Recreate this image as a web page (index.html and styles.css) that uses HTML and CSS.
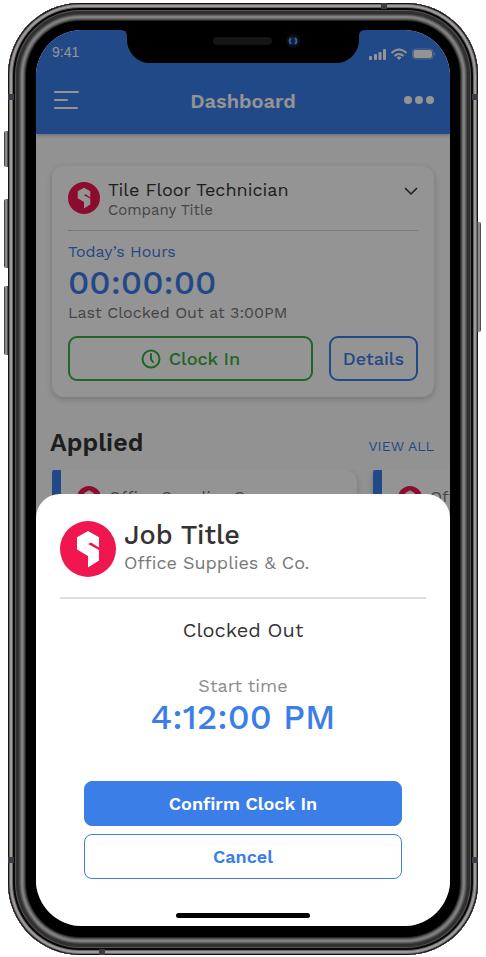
FILE: index.html
```
<!DOCTYPE html>
<html lang="en">
<head>
<meta charset="utf-8">
<meta name="viewport" content="width=device-width, initial-scale=1">
<title>Dashboard</title>
<link rel="stylesheet" href="styles.css">
</head>
<body>
<svg class="defs" aria-hidden="true">
  <symbol id="logo" viewBox="0 0 56 56">
    <circle cx="28" cy="28" r="28" fill="#f01650"/>
    <path d="M28 10 39 16.300V26.500L31 21.500 28 23 39 29V39.500L28 46.500V35L17 28.500V16.300Z" fill="#fff"/>
  </symbol>
</svg>
<div class="phone">
  <span class="key key-mute"></span><span class="key key-up"></span><span class="key key-down"></span><span class="key key-power"></span>
  <span class="band band-tl"></span><span class="band band-tr"></span><span class="band band-bl"></span><span class="band band-br"></span><span class="band band-top"></span><span class="band band-bottom"></span>
  <div class="screen">
    <main class="dashboard">
      <header class="topbar">
        <div class="status">
          <span>9:41</span>
          <svg width="67" height="12" viewBox="0 0 67 12" fill="#fff" aria-hidden="true">
            <rect x="0" y="8" width="3" height="4" rx="1"/><rect x="5" y="6" width="3" height="6" rx="1"/><rect x="9.500" y="4" width="3" height="8" rx="1"/><rect x="14" y="1" width="3" height="11" rx="1"/>
            <g fill="none" stroke="#fff" stroke-width="2"><path d="M22.500 5Q30 -2 37.500 5"/><path d="M25.500 8Q30 4 34.500 8"/></g><path d="M27.500 9.500Q30 7.500 32.500 9.500L30 12Z"/>
            <rect x="43.500" y="1" width="20.500" height="10" rx="3" fill="none" stroke="#fff" stroke-opacity=".4"/><rect x="44.500" y="2" width="18.500" height="8" rx="2"/><path d="M65 4Q67 6 65 8Z" opacity=".5"/>
          </svg>
        </div>
        <div class="nav">
          <button class="icon-btn" aria-label="Menu"><svg width="30" height="20" viewBox="0 0 30 20" stroke="#fff" stroke-width="2" stroke-linecap="round"><path d="M3 1H26M3 9H15M3 17H25"/></svg></button>
          <h1>Dashboard</h1>
          <button class="icon-btn" aria-label="More"><svg width="30" height="20" viewBox="0 0 30 20" fill="#fff"><circle cx="4" cy="9" r="4"/><circle cx="15" cy="9" r="4"/><circle cx="26" cy="9" r="4"/></svg></button>
        </div>
      </header>
      <section class="card shift">
        <div class="shift-head">
          <svg class="logo-md" aria-hidden="true"><use href="#logo"/></svg>
          <div class="names"><h2>Tile Floor Technician</h2><p>Company Title</p></div>
          <button class="icon-btn" aria-label="Expand"><svg width="14" height="10" viewBox="0 0 14 10" fill="none" stroke="#333" stroke-width="1.500"><path d="M1 1 7 7 13 1"/></svg></button>
        </div>
        <p class="label">Today’s Hours</p>
        <p class="hours">00:00:00</p>
        <p class="last">Last Clocked Out at 3:00PM</p>
        <div class="actions">
          <button class="btn-outline green"><svg width="20" height="20" viewBox="0 0 20 20" fill="none" stroke="currentColor" stroke-width="2" aria-hidden="true"><circle cx="10" cy="10" r="8.500"/><path d="M10 5V10.500L12 13" stroke-linecap="round"/></svg>Clock In</button>
          <button class="btn-outline blue">Details</button>
        </div>
      </section>
      <div class="section-head"><h2>Applied</h2><a href="#applied">VIEW ALL</a></div>
      <div class="jobs" id="applied">
        <article class="card job"><svg class="logo-sm" aria-hidden="true"><use href="#logo"/></svg><p>Office Supplies Co.</p></article>
        <article class="card job"><svg class="logo-sm" aria-hidden="true"><use href="#logo"/></svg><p>Office Supplies Co.</p></article>
      </div>
    </main>
    <div class="scrim"></div>
    <svg class="notch" width="244" height="34" viewBox="0 0 244 34" aria-hidden="true">
      <path d="M0 0H244V1Q238 1 238 7V10A23 23 0 0 1 215 34H29A23 23 0 0 1 6 10V7Q6 1 0 1Z"/>
      <rect x="92" y="8" width="59" height="8" rx="4" fill="#151515"/>
      <circle cx="172" cy="12" r="7" fill="#0d0e12"/><circle cx="172" cy="12" r="4" fill="#102044"/>
      <path d="M170 9Q167 12 170 15M174 9Q177 12 174 15" fill="none" stroke="#2c609b" stroke-width="2"/>
    </svg>
    <section class="sheet" role="dialog" aria-labelledby="job">
      <div class="sheet-head">
        <svg class="logo-lg" aria-hidden="true"><use href="#logo"/></svg>
        <div class="names"><h2 id="job">Job Title</h2><p>Office Supplies &amp; Co.</p></div>
      </div>
      <p class="state">Clocked Out</p>
      <p class="start">Start time</p>
      <p class="time">4:12:00 PM</p>
      <div class="choices">
        <button class="primary">Confirm Clock In</button>
        <button class="secondary">Cancel</button>
      </div>
      <span class="home"></span>
    </section>
  </div>
</div>
</body>
</html>
```
FILE: styles.css
```
:root { --blue: #3c7ee8; --ink: #333; --muted: #777; }
* { box-sizing: border-box; }
body {
  margin: 0;
  min-height: 100vh;
  padding: 3px 8px 2px;
  display: flex;
  background: #fff;
  color: var(--ink);
  font-family: "Work Sans", Inter, sans-serif;
}
h1, h2, p { margin: 0; font-weight: 400; }
button { font: inherit; cursor: pointer; }
.defs { position: absolute; width: 0; height: 0; }

/* Phone body: concentric metal rings around the glass */
.phone {
  position: relative;
  flex: 1;
  min-width: 0;
  display: flex;
  padding: 27px 28px 29px;
  border-radius: 72px;
  background: #000;
  box-shadow:
    inset 0 0 0 1px #151313,
    inset 0 0 0 2px #6e6a6a,
    inset 0 0 0 4px #a09b9b,
    inset 0 0 0 5px #686464,
    inset 0 0 0 7px #080808,
    inset 0 0 0 8px #555,
    inset 0 0 0 11px #303030,
    inset 0 0 0 12px #484848,
    inset 0 0 0 13px #626262,
    inset 0 0 0 15px #808080,
    inset 0 0 0 16px #6c6c6c,
    inset 0 0 0 17px #4c4c4c,
    inset 0 0 0 18px #282828;
}
.key { position: absolute; width: 4px; background: linear-gradient(90deg, #222, #aaa 50%, #333); border-radius: 2px 0 0 2px; left: -4px; }
.key-mute { top: 128px; height: 36px; }
.key-up { top: 196px; height: 69px; }
.key-down { top: 283px; height: 69px; }
.key-power { top: 219px; height: 110px; left: auto; right: -3px; border-radius: 0 2px 2px 0; }
.band { position: absolute; width: 6px; height: 6px; background: #3a3e44; }
.band-tl { top: 91px; left: 0; }
.band-tr { top: 91px; right: 0; }
.band-bl { bottom: 92px; left: 0; }
.band-br { bottom: 92px; right: 0; }
.band-top { top: 0; right: 91px; }
.band-bottom { bottom: 0; left: 91px; }

.screen {
  position: relative;
  flex: 1;
  min-width: 0;
  overflow: hidden;
  border-radius: 46px;
  background: #fbfbfb;
}
.scrim { position: absolute; inset: 0; background: rgba(0, 0, 0, .42); }
.notch { position: absolute; top: -1px; left: 50%; transform: translateX(-50%); }

.topbar { background: var(--blue); color: #fff; padding: 14px 16px 20px; box-shadow: 0 1px 4px rgba(0, 0, 0, .3); }
.status { display: flex; justify-content: space-between; align-items: center; height: 16px; font: 14px "Liberation Sans", sans-serif; }
.status svg { margin: 4px -2px 0 0; }
.nav { display: flex; justify-content: space-between; align-items: center; height: 22px; margin: 30px 0 2px; }
.nav h1 { font-size: 20px; font-weight: 600; line-height: 22px; }
.icon-btn { display: flex; padding: 0; border: 0; background: none; }

.card { background: #fff; border-radius: 12px; box-shadow: 0 2px 6px rgba(0, 0, 0, .2); }
.shift { margin: 32px 16px 0; padding: 12px 16px 16px; }
.shift-head { display: flex; align-items: center; gap: 8px; padding-bottom: 12px; border-bottom: 1px solid #d0d0d0; }
.names { flex: 1; }
.logo-md { width: 32px; height: 32px; }
.logo-sm { width: 24px; height: 24px; }
.logo-lg { width: 56px; height: 56px; }
.shift-head h2 { font-size: 18px; line-height: 24px; }
.shift-head p { font-size: 15px; line-height: 16px; color: var(--muted); }
.shift-head .icon-btn { padding-bottom: 12px; }
.label { margin-top: 12px; font-size: 16px; line-height: 18px; color: var(--blue); }
.hours { font-size: 34px; line-height: 42px; font-weight: 500; color: var(--blue); }
.last { font-size: 16px; line-height: 20px; color: var(--muted); }
.actions { display: flex; gap: 16px; margin-top: 13px; }
.btn-outline { display: flex; justify-content: center; align-items: center; gap: 8px; height: 45px; padding: 0 12px; border: 2px solid; border-radius: 9px; background: none; font-size: 18px; font-weight: 500; }
.green { flex: 1; color: #34b044; }
.blue { color: var(--blue); }

.section-head { display: flex; justify-content: space-between; align-items: baseline; margin: 30px 16px 0 14px; }
.section-head h2 { font-size: 25px; line-height: 32px; font-weight: 600; }
.section-head a { font-size: 14px; color: var(--blue); text-decoration: none; }
.jobs { display: flex; gap: 16px; margin: 11px 0 0 16px; overflow: hidden; }
.job { flex: 0 0 305px; display: flex; align-items: flex-start; gap: 8px; height: 120px; padding: 16px; border-left: 9px solid var(--blue); border-radius: 2px 12px 12px 2px; color: var(--muted); font-size: 16px; line-height: 22px; }

.sheet { position: absolute; inset: auto 0 0; display: flex; flex-direction: column; padding: 24px 24px 8px; border-radius: 24px 24px 0 0; background: #fff; text-align: center; }
.sheet-head { display: flex; align-items: center; gap: 8px; padding: 3px 0 20px; border-bottom: 2px solid #ddd; text-align: left; }
.sheet-head h2 { font-size: 27px; line-height: 28px; font-weight: 500; }
.sheet-head p { font-size: 18px; line-height: 28px; color: var(--muted); }
.state { margin-top: 19px; font-size: 20px; line-height: 24px; }
.start { margin-top: 32px; font-size: 18px; line-height: 24px; color: #8c8c8c; }
.time { font-size: 35px; line-height: 38px; font-weight: 500; color: var(--blue); }
.choices { display: grid; gap: 8px; margin: 45px 24px 34px; }
.choices button { height: 45px; border: 1px solid var(--blue); border-radius: 8px; font-size: 18px; font-weight: 600; }
.primary { background: var(--blue); color: #fff; }
.secondary { background: #fff; color: var(--blue); }
.home { align-self: center; width: 134px; height: 5px; border-radius: 3px; background: #000; }
```
